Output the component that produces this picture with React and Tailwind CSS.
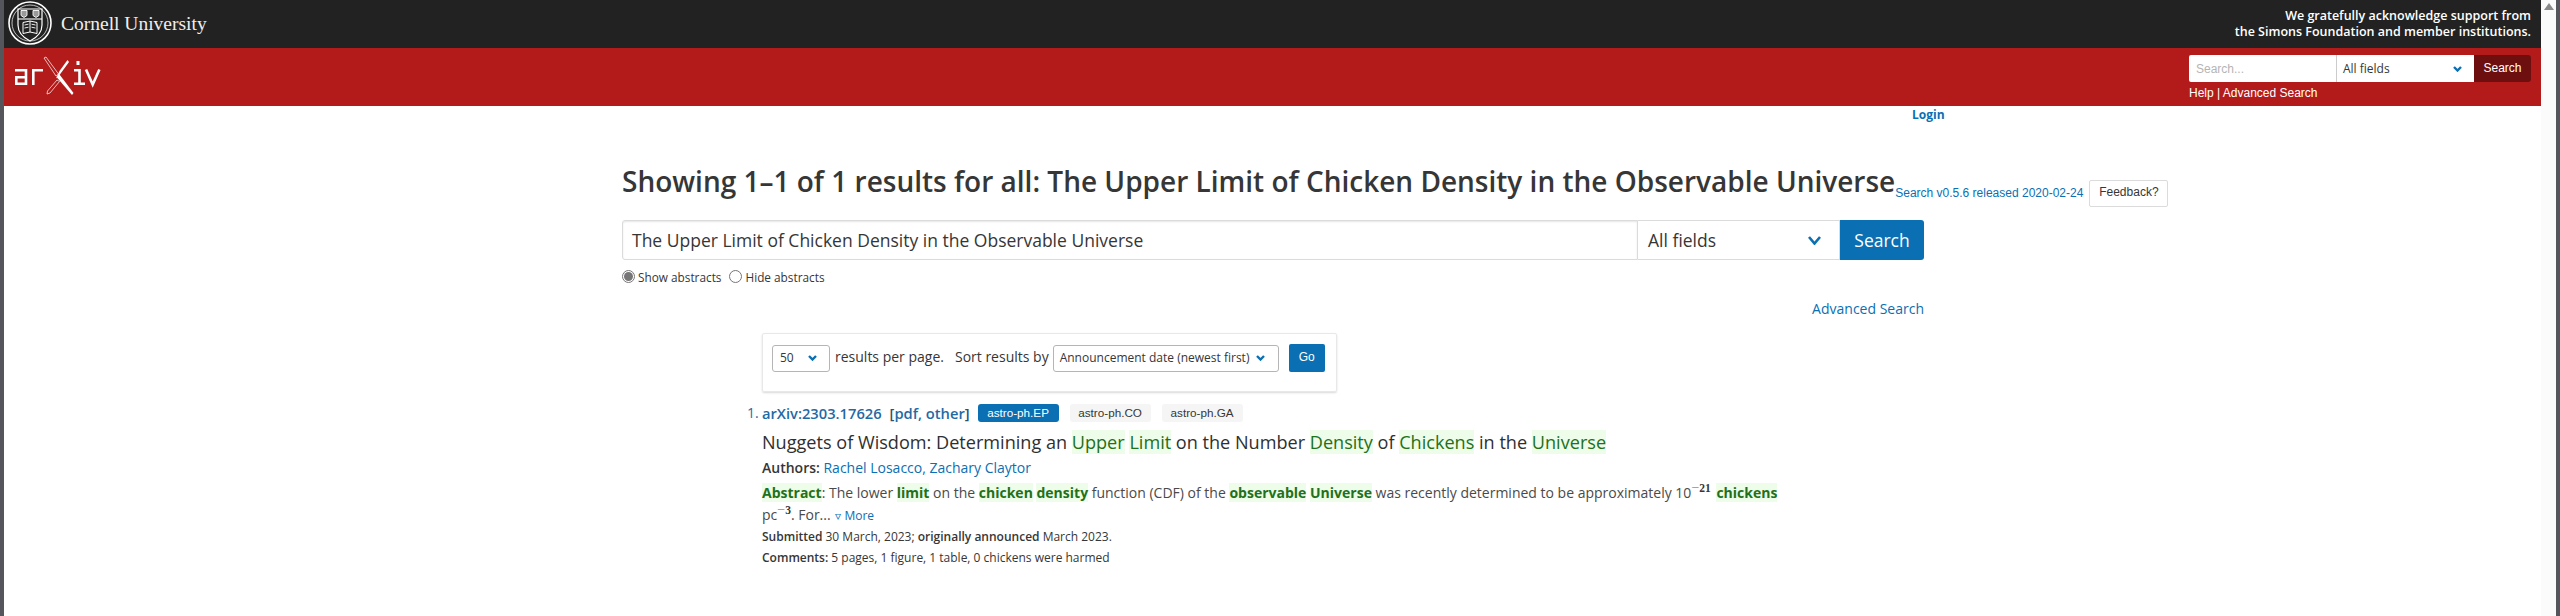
import React from 'react';

const sans = { fontFamily: '"Open Sans", sans-serif' };
const arial = { fontFamily: '"Liberation Sans", sans-serif' };
const serif = { fontFamily: '"Liberation Serif", serif' };

const CornellSeal = () => (
    <svg width="46" height="46" viewBox="0 0 46 46" fill="none" stroke="#fff" className="shrink-0">
        <circle cx="22" cy="22" r="21" strokeWidth="1.6" />
        <circle cx="22" cy="22" r="18" strokeWidth="0.7" />
        <path d="M10 8h24v16c0 8-6 13-12 16-6-3-12-8-12-16z" strokeWidth="1.2" />
        <path d="M10 18h24" strokeWidth="1.1" />
        <path d="M13 9.5h6v5l-3 2-3-2zM25 9.5h6v5l-3 2-3-2z" strokeWidth="0.9" fill="#999" />
        <path d="M22 20l-7 1.5v11l7-1.5 7 1.5v-11zM22 20v11" strokeWidth="1" />
        <path d="M16.5 24l4-.8M16.5 27l4-.8M23.5 23.2l4 .8M23.5 26.2l4 .8" strokeWidth="0.9" />
    </svg>
);

const ArxivLogo = () => (
    <svg width="90" height="42" viewBox="0 0 90 42" fill="none" className="shrink-0">
        <path d="M1 14.3h11v13.4H2.3v-6.4H12" stroke="#fff" strokeWidth="2.6" />
        <path d="M19.3 29V14.3H29" stroke="#fff" strokeWidth="2.6" />
        <path d="M30 2l2-1 12.5 17-2.5 2z" stroke="#fff" strokeWidth="0.7" />
        <path d="M42.5 21l3-2.5L59.5 37l-1.5 2z" fill="#fff" />
        <path d="M55 6l-9.5 13-3.5 3.5 3.5-7.5L53.5 4z" fill="#fff" />
        <path d="M43 24l-9.5 11-.5 3 3-1 9.5-11.5z" stroke="#fff" strokeWidth="0.7" />
        <path d="M60 14.3h5.5V29M60 27.7h11" stroke="#fff" strokeWidth="2.6" />
        <rect x="62.5" y="5" width="3" height="4" fill="#fff" />
        <path d="M72 13.5l6.7 15 6.7-15" stroke="#fff" strokeWidth="2.6" />
    </svg>
);

const Chevron = ({ w = 9, h = 6, sw = 2.4 }) => (
    <svg width={w} height={h} viewBox={`0 0 ${w} ${h}`} fill="none" stroke="#0a6fb3" strokeWidth={sw} className="shrink-0">
        <path d={`M1 1l${w / 2 - 1} ${h - 2.5} ${w / 2 - 1} ${-(h - 2.5)}`} />
    </svg>
);

const Hl = ({ children, bold }) => (
    <span className={`bg-[#eefde9] text-[#23701a] ${bold ? 'font-bold' : ''}`}>{children}</span>
);

const Tag = ({ children, primary }) => (
    <span className={`rounded-[3px] w-[81px] h-[18px] flex items-center justify-center text-[11.7px] pb-[1px] ${primary ? 'bg-[#0a6fb3] text-white' : 'bg-[#f5f5f5] text-[#363636]'}`} style={arial}>
        {children}
    </span>
);

const Radio = ({ checked }) => (
    <span className={`w-[13px] h-[13px] -mt-[3px] rounded-full border border-[#767676] flex items-center justify-center shrink-0`}>
        {checked && <span className="w-[9px] h-[9px] rounded-full bg-[#767676]" />}
    </span>
);

const MathSup = ({ value }) => (
    <sup className="text-[11.5px]" style={serif}>
        <span className="text-[14px] font-normal text-[#8a8a8a]">−</span>
        <span className="font-bold text-[#363636]">{value}</span>
    </sup>
);

const App = () => {
    return (
        <div className="flex w-[2560px] h-[616px] overflow-hidden bg-white text-[#363636]" style={sans}>
            <div className="w-[4px] bg-[#55565b] shrink-0" />
            <div className="flex-1 min-w-0 flex flex-col">
                <div className="h-[48px] bg-[#222] flex items-center justify-between pl-[4px] pr-[10px] text-white">
                    <div className="flex items-center">
                        <CornellSeal />
                        <span className="text-[19.5px] text-[#eee] ml-[7px]" style={serif}>Cornell University</span>
                    </div>
                    <div className="text-right text-[12.5px] leading-[16px] font-semibold">
                        <div>We gratefully acknowledge support from</div>
                        <div>the Simons Foundation and member institutions.</div>
                    </div>
                </div>
                <div className="h-[58px] bg-[#b31b1b] flex items-center justify-between pl-[10px] pr-[10px]">
                    <ArxivLogo />
                    <div className="w-[342px] pt-[1px]" style={arial}>
                        <div className="flex h-[27px] text-[12px]">
                            <div className="w-[148px] bg-white text-[#b5b5b5] flex items-center pl-[7px] border-r border-[#ccc] rounded-l-[2px]">Search...</div>
                            <div className="w-[137px] bg-white text-[#363636] flex items-center justify-between pl-[6px] pr-[12px]" style={sans}>
                                All fields
                                <Chevron />
                            </div>
                            <div className="w-[57px] rounded-r-[3px] bg-[#6d0f0f] text-white flex items-center justify-center pb-[2px]">Search</div>
                        </div>
                        <div className="text-white text-[12px] leading-[14px] mt-[4px]">Help | Advanced Search</div>
                    </div>
                </div>
                <div className="flex-1">
                    <div className="pl-[1908px] pt-[1px] text-[12px] font-bold text-[#0a6fb3] leading-[16px]">Login</div>
                    <div className="pl-[618px]">
                        <div className="flex items-start mt-[38px] h-[40px]">
                            <h1 className="text-[28px] font-semibold leading-[40px] whitespace-nowrap text-[#363636]">Showing 1–1 of 1 results for all: The Upper Limit of Chicken Density in the Observable Universe</h1>
                            <span className="text-[12px] leading-[16px] text-[#0a6fb3] mt-[24px] whitespace-nowrap" style={arial}>Search v0.5.6 released 2020-02-24</span>
                            <span className="ml-[6px] mt-[19px] h-[27px] w-[79px] justify-center border border-[#dbdbdb] rounded-[2px] text-[12px] pb-[3px] text-[#363636] flex items-center whitespace-nowrap shrink-0" style={arial}>Feedback?</span>
                        </div>
                        <div className="flex w-[1302px] h-[40px] mt-[19px] text-[17.5px]">
                            <div className="flex-1 border border-[#dbdbdb] rounded-l-[3px] flex items-center pl-[9px] shadow-[inset_0_1px_2px_rgba(10,10,10,0.1)]">The Upper Limit of Chicken Density in the Observable Universe</div>
                            <div className="w-[202px] border-y border-r border-[#dbdbdb] flex items-center justify-between pl-[10px] pr-[18px]">
                                All fields
                                <Chevron w={13} h={9} sw={2.6} />
                            </div>
                            <div className="w-[84px] bg-[#0a6fb3] text-white rounded-r-[3px] flex items-center justify-center">Search</div>
                        </div>
                        <div className="flex items-center h-[14px] mt-[11px] text-[11.8px]">
                            <Radio checked />
                            <span className="ml-[3px]">Show abstracts</span>
                            <span className="ml-[8px]"><Radio /></span>
                            <span className="ml-[3px]">Hide abstracts</span>
                        </div>
                        <div className="w-[1302px] text-right text-[14px] text-[#0a6fb3] leading-[20px] mt-[14px]">Advanced Search</div>
                        <div className="ml-[140px] mt-[14px] w-[575px] h-[59px] border border-[#e8e8e8] rounded-[2px] shadow-[0_1px_2px_rgba(0,0,0,0.15)] flex items-center pl-[9px] pb-[9px] text-[14px]">
                            <div className="w-[58px] h-[27px] border border-[#b5b5b5] rounded-[3px] flex items-center justify-between pl-[7px] pr-[12px] text-[12px]">
                                50
                                <Chevron />
                            </div>
                            <span className="ml-[5px] -mt-[4px]">results per page.</span>
                            <span className="ml-[11px] -mt-[4px]">Sort results by</span>
                            <div className="ml-[4px] w-[226px] h-[27px] border border-[#b5b5b5] rounded-[3px] flex items-center justify-between pl-[6px] pr-[13px] text-[12px]">
                                Announcement date (newest first)
                                <Chevron />
                            </div>
                            <div className="ml-[10px] w-[36px] h-[28px] rounded-[2px] bg-[#0a6fb3] text-white text-[12px] flex items-center justify-center pb-[2px]" style={arial}>Go</div>
                        </div>
                        <div className="ml-[125px] mt-[9px] flex">
                            <span className="w-[15px] text-[14px] text-[#1f6aa5] leading-[24px]">1.</span>
                            <div>
                                <div className="flex items-center h-[24px] text-[14.7px] text-[#1f6aa5] font-semibold">
                                    <span>arXiv:2303.17626</span>
                                    <span className="ml-[8px]"><span className="text-[#2f4f6b]">[</span>pdf, other<span className="text-[#2f4f6b]">]</span></span>
                                    <span className="ml-[8px] flex gap-[11px] font-normal"><Tag primary>astro-ph.EP</Tag><Tag>astro-ph.CO</Tag><Tag>astro-ph.GA</Tag></span>
                                </div>
                                <div className="text-[18.1px] leading-[24px] mt-[5px] whitespace-nowrap text-[#2f2f2f]">
                                    Nuggets of Wisdom: Determining an <Hl>Upper</Hl> <Hl>Limit</Hl> on the Number <Hl>Density</Hl> of <Hl>Chickens</Hl> in the <Hl>Universe</Hl>
                                </div>
                                <div className="text-[14px] leading-[20px] mt-[4px]"><span className="font-semibold">Authors:</span> <span className="text-[#0a6fb3]">Rachel Losacco, Zachary Claytor</span></div>
                                <div className="text-[14px] leading-[20px] mt-[5px] whitespace-nowrap text-[#4a4a4a]">
                                    <Hl bold>Abstract</Hl>: The lower <Hl bold>limit</Hl> on the <Hl bold>chicken</Hl> <Hl bold>density</Hl> function (CDF) of the <Hl bold>observable</Hl> <Hl bold>Universe</Hl> was recently determined to be approximately 10<MathSup value="21" /> <span className="ml-[2px]"><Hl bold>chickens</Hl></span>
                                </div>
                                <div className="text-[14px] leading-[22px] mt-[1px] text-[#4a4a4a] whitespace-nowrap">
                                    pc<MathSup value="3" />. For... <span className="text-[12px] text-[#0a6fb3] ml-[1px]">▿ More</span>
                                </div>
                                <div className="text-[12px] leading-[20px]"><span className="font-semibold">Submitted</span> 30 March, 2023; <span className="font-semibold">originally announced</span> March 2023.</div>
                                <div className="text-[12px] leading-[20px] mt-[1px]"><span className="font-semibold">Comments:</span> 5 pages, 1 figure, 1 table, 0 chickens were harmed</div>
                            </div>
                        </div>
                    </div>
                </div>
            </div>
            <div className="w-[15px] bg-[#fbfbfb] shrink-0 flex justify-center pt-[3px]">
                <svg width="10" height="7" viewBox="0 0 10 7" className="shrink-0"><path d="M5 0l5 7H0z" fill="#8a8a8a" /></svg>
            </div>
            <div className="w-[4px] bg-[#55565b] shrink-0" />
        </div>
    );
};

export default App;
